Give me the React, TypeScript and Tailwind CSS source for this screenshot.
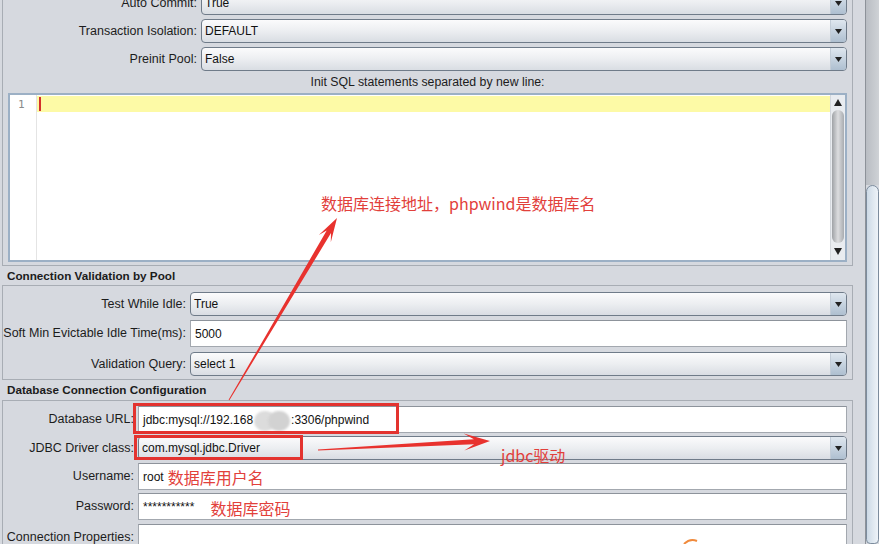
import React from "react";

const Arrow = ({ w = 7, h = 5, up = false }: { w?: number; h?: number; up?: boolean }) => (
  <svg width={w} height={h}>
    {up ? (
      <polygon points={`0,${h} ${w},${h} ${w / 2},0`} fill="#222" />
    ) : (
      <polygon points={`0,0 ${w},0 ${w / 2},${h}`} fill="#222" />
    )}
  </svg>
);

function Combo({ value, className = "" }: { value: string; className?: string }) {
  return (
    <div
      className={`flex h-[24px] rounded-[4px] border border-[#6f7b89] bg-linear-to-b from-[#fbfbfc] via-[#eceef1] to-[#d9dde3] overflow-hidden ${className}`}
    >
      <div className="flex-1 flex items-center pl-[3px] text-[#111]">{value}</div>
      <div className="w-[16px] border-l border-[#c2ccd7] bg-linear-to-b from-[#dfe7ef] to-[#aebfd0] flex items-center justify-center">
        <Arrow />
      </div>
    </div>
  );
}

function Field({ children, className = "" }: { children?: React.ReactNode; className?: string }) {
  return (
    <div
      className={`flex items-center h-[27px] border border-[#a3a8af] border-t-[#8d939b] bg-white pl-[4px] text-[#111] ${className}`}
    >
      {children}
    </div>
  );
}

function Row({ label, lw, children, className = "" }: { label: string; lw: number; children: React.ReactNode; className?: string }) {
  // label widths are fixed per section so fields line up
  return (
    <div className={`flex items-center ${className}`}>
      <div className="text-right text-[12.5px] text-[#1c1c1c] shrink-0 whitespace-nowrap" style={{ width: lw }}>
        {label}
      </div>
      <div className="ml-[4px] flex-1">{children}</div>
    </div>
  );
}

export default function App() {
  return (
    <div className="w-[879px] h-[544px] overflow-hidden bg-[#d6d9df] flex font-['Liberation_Sans','Noto_Sans_CJK_SC',sans-serif] text-[12px]">
      <div className="relative w-[865px] shrink-0">
        <div className="-mt-[11px]">
          {/* pool settings panel */}
          <div className="ml-[2px] w-[851px] border-x border-b border-[#a8adb4] pr-[5px] pb-[3px]">
            <Row label="Auto Commit:" lw={194} className="h-[28px]">
              <Combo value="True" />
            </Row>
            <Row label="Transaction Isolation:" lw={194} className="h-[28px]">
              <Combo value="DEFAULT" />
            </Row>
            <Row label="Preinit Pool:" lw={194} className="h-[28px]">
              <Combo value="False" />
            </Row>
            <div className="h-[18px] flex items-center justify-center text-[12.3px] text-[#1c1c1c] pl-[5px]">
              Init SQL statements separated by new line:
            </div>
            <div className="mt-[2px] ml-[5px] h-[169px] border-2 border-[#9cb0c5] bg-white flex">
              <div className="w-[27px] border-r border-[#e4e4e4] pt-[3px] pl-[8px] text-[11px] leading-[14px] text-[#8a8a8a] font-['DejaVu_Sans_Mono',monospace]">
                1
              </div>
              <div className="flex-1">
                <div className="mt-[1px] h-[16px] bg-[#fdfaa6] flex items-center">
                  <div className="ml-[2px] w-[2px] h-[14px] bg-[#d3302b]" />
                </div>
              </div>
              <div className="w-[15px] flex flex-col bg-[#e9ecf0] border-l border-[#d3d7dc]">
                <div className="h-[15px] flex items-center justify-center">
                  <Arrow up w={8} h={7} />
                </div>
                <div className="flex-1 mx-[1px] rounded-[6px] bg-linear-to-r from-[#9fa2a6] via-[#dcdddf] to-[#a9acb0]" />
                <div className="h-[17px] flex items-center justify-center">
                  <Arrow w={8} h={7} />
                </div>
              </div>
            </div>
          </div>

          <div className="h-[19px] flex items-center pl-[7px] font-bold text-[11.7px] text-[#1c1c1c]">
            Connection Validation by Pool
          </div>
          <div className="ml-[2px] w-[851px] border border-[#a8adb4] pr-[5px] pt-[6px] pb-[3px] flex flex-col">
            <Row label="Test While Idle:" lw={183}>
              <Combo value="True" />
            </Row>
            <Row label="Soft Min Evictable Idle Time(ms):" lw={183} className="mt-[4px]">
              <Field className="h-[25px]">5000</Field>
            </Row>
            <Row label="Validation Query:" lw={183} className="mt-[5px]">
              <Combo value="select 1" />
            </Row>
          </div>

          <div className="h-[20px] flex items-center pl-[7px] font-bold text-[11.7px] text-[#1c1c1c]">
            Database Connection Configuration
          </div>
          <div className="ml-[2px] w-[851px] border-x border-t border-[#a8adb4] pr-[5px] pt-[5px] flex flex-col">
            <Row label="Database URL:" lw={131}>
              <Field>
                jdbc:mysql://192.168
                <span className="inline-flex w-[38px] h-[20px] relative">
                  <span className="absolute left-[1px] top-[1px] w-[22px] h-[20px] rounded-full bg-[#dcdcdc] blur-[1px]" />
                  <span className="absolute left-[15px] top-[1px] w-[22px] h-[20px] rounded-full bg-[#d2d2d2] blur-[1px]" />
                </span>
                :3306/phpwind
              </Field>
            </Row>
            <Row label="JDBC Driver class:" lw={131} className="mt-[3px]">
              <Combo value="com.mysql.jdbc.Driver" />
            </Row>
            <Row label="Username:" lw={131} className="mt-[3px]">
              <Field>
                root
                <span className="ml-[4px] text-[16px] text-[#e2403b] font-['Noto_Sans_CJK_SC',sans-serif]">数据库用户名</span>
              </Field>
            </Row>
            <Row label="Password:" lw={131} className="mt-[3px]">
              <Field>
                ***********
                <span className="ml-[16px] mt-[3px] text-[16px] text-[#e2403b] font-['Noto_Sans_CJK_SC',sans-serif]">数据库密码</span>
              </Field>
            </Row>
            <Row label="Connection Properties:" lw={131} className="mt-[4px]">
              <Field />
            </Row>
          </div>
        </div>

        {/* annotations */}
        <div className="absolute left-[133px] top-[403px] w-[266px] h-[31px] border-[3px] border-[#e3332f]" />
        <div className="absolute left-[134px] top-[435px] w-[169px] h-[25px] border-[3px] border-[#e3332f]" />
        <svg className="absolute left-0 top-0 pointer-events-none" width="865" height="544">
          <polygon
            points="229.4,400.3 331.0,233.1 330.8,242.2 337,218 318.8,235.1 326.7,230.5 228.6,399.7"
            fill="#e8322e"
          />
          <polygon
            points="318,450.6 474.1,444.3 464.4,450.4 490,441 463.6,433.4 473.9,439.3 318,449.6"
            fill="#e8322e"
          />
          <path d="M684 544 Q690 538 697 541" stroke="#f08a3c" strokeWidth="2" fill="none" />
        </svg>
        <div className="absolute left-[321px] top-[193px] text-[16px] leading-[20px] text-[#e2403b] font-['Noto_Sans_CJK_SC',sans-serif] whitespace-nowrap">
          数据库连接地址，phpwind是数据库名
        </div>
        <div className="absolute left-[501px] top-[445px] text-[16px] leading-[20px] text-[#e2403b] font-['Noto_Sans_CJK_SC',sans-serif] whitespace-nowrap">
          jdbc驱动
        </div>
      </div>

      {/* outer scrollbar */}
      <div className="w-[14px] flex flex-col border-l border-[#8d9299]">
        <div className="h-[185px] bg-linear-to-r from-[#b9bdc3] to-[#cfd2d6]" />
        <div className="flex-1 rounded-t-[9px] rounded-b-[6px] border border-[#7c8c9d] bg-linear-to-r from-[#cddae6] to-[#eef3f8]" />
      </div>
    </div>
  );
}
